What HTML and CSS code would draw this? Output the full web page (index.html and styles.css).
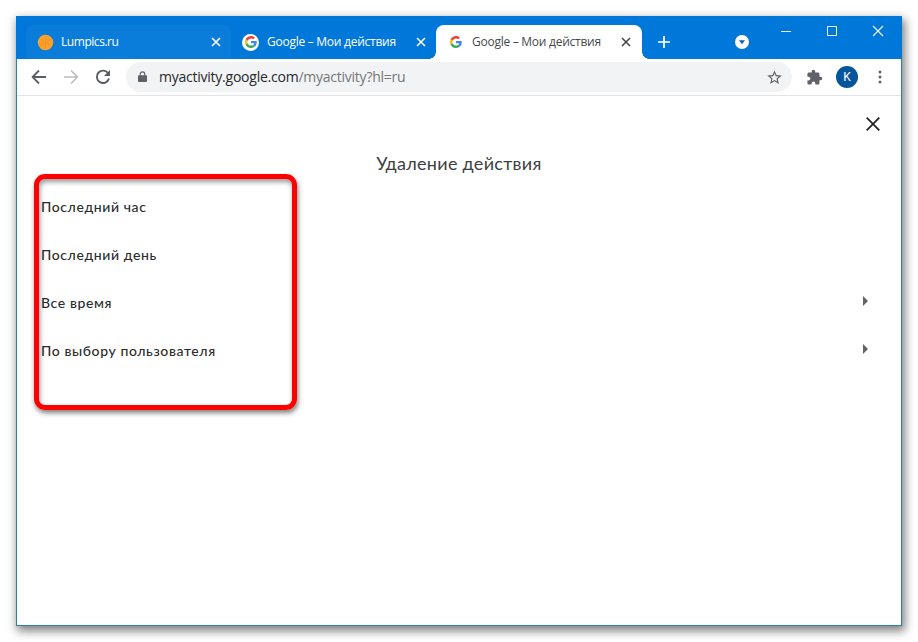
FILE: index.html
```html
<!DOCTYPE html>
<html lang="ru">
<head>
  <meta charset="UTF-8">
  <meta name="viewport" content="width=device-width, initial-scale=1.0">
  <title>Google – Мои действия</title>
  <link rel="stylesheet" href="styles.css">
</head>
<body>
  <svg width="0" height="0" class="defs">
    <symbol id="google" viewBox="0 0 48 48">
      <path fill="#EA4335" d="M24 9.5c3.54 0 6.71 1.22 9.21 3.6l6.85-6.85C35.9 2.38 30.47 0 24 0 14.62 0 6.51 5.38 2.56 13.22l7.98 6.19C12.43 13.72 17.74 9.5 24 9.5z"/>
      <path fill="#4285F4" d="M46.98 24.55c0-1.57-.15-3.09-.38-4.55H24v9.02h12.94c-.58 2.96-2.26 5.48-4.78 7.18l7.73 6c4.51-4.18 7.09-10.36 7.09-17.65z"/>
      <path fill="#FBBC05" d="M10.53 28.59c-.48-1.45-.76-2.99-.76-4.59s.27-3.14.76-4.59l-7.98-6.19C.92 16.46 0 20.12 0 24c0 3.88.92 7.54 2.56 10.78l7.97-6.19z"/>
      <path fill="#34A853" d="M24 48c6.48 0 11.93-2.13 15.89-5.81l-7.73-6c-2.15 1.45-4.92 2.3-8.16 2.3-6.26 0-11.57-4.22-13.47-9.91l-7.98 6.19C6.51 42.62 14.62 48 24 48z"/>
    </symbol>
    <symbol id="cross" viewBox="0 0 10 10">
      <path d="M1 1l8 8M9 1L1 9" fill="none" stroke="currentColor" stroke-width="1.6"/>
    </symbol>
  </svg>

  <div class="window">
    <div class="tabstrip">
      <div class="tab tab-hover">
        <svg class="favicon" viewBox="0 0 18 18">
          <circle cx="9" cy="9" r="8.2" fill="#fba02a"/>
          <path d="M9 9V3M9 9l5-3M9 9l5 3M9 9v6M9 9l-5 3M9 9L4 6" stroke="#f39420" stroke-width="1"/>
        </svg>
        <span class="tab-title title-short">Lumpics.ru</span>
        <svg class="tab-close"><use href="#cross"/></svg>
      </div>
      <div class="tab">
        <span class="favicon favicon-round"><svg width="12" height="12"><use href="#google"/></svg></span>
        <span class="tab-title">Google – Мои действия</span>
        <svg class="tab-close"><use href="#cross"/></svg>
      </div>
      <div class="tab tab-active">
        <span class="favicon"><svg width="12" height="12"><use href="#google"/></svg></span>
        <span class="tab-title">Google – Мои действия</span>
        <svg class="tab-close"><use href="#cross"/></svg>
      </div>
      <svg class="new-tab" viewBox="0 0 12 12"><path d="M6 0v12M0 6h12" stroke="#fff" stroke-width="1.7"/></svg>
      <svg class="tab-search" viewBox="0 0 14 14"><circle cx="7" cy="7" r="7" fill="#fff"/><path d="M4 5.2h6L7 9.2z" fill="#0a62b5"/></svg>
      <div class="window-buttons">
        <svg viewBox="0 0 12 12"><path d="M1 6.5h10" stroke="#fff"/></svg>
        <svg viewBox="0 0 12 12"><path d="M1.5 1.5h9v9h-9z" fill="none" stroke="#fff"/></svg>
        <svg viewBox="0 0 12 12"><path d="M1 1l10 10M11 1L1 11" stroke="#fff" stroke-width="1.1"/></svg>
      </div>
    </div>

    <div class="toolbar">
      <svg class="nav" viewBox="0 0 16 16"><path d="M15 8H2M8 1.5L1.6 8 8 14.5" fill="none" stroke="#5a5d61" stroke-width="1.8"/></svg>
      <svg class="nav" viewBox="0 0 16 16"><path d="M1 8h13M8 1.5L14.4 8 8 14.5" fill="none" stroke="#babcbe" stroke-width="1.6"/></svg>
      <svg class="nav" viewBox="0 0 16 16"><path d="M13.3 4.5A6.2 6.2 0 1 0 14 9.5" fill="none" stroke="#5a5d61" stroke-width="1.9"/><path d="M15 1v6H9z" fill="#5a5d61"/></svg>
      <div class="omnibox">
        <svg class="lock" viewBox="0 0 10 13"><path d="M1 4.5h8q1 0 1 1V11q0 1-1 1H1q-1 0-1-1V5.500q0-1 1-1z" fill="#5f6368"/><path d="M2.500 5V3.300a2.500 2.500 0 0 1 5 0V5" fill="none" stroke="#5f6368" stroke-width="1.3"/></svg>
        <span class="url">myactivity.google.com<span class="path">/myactivity?hl=ru</span></span>
        <svg class="star" viewBox="0 0 24 24"><path fill="#5f6368" d="M22 9.240l-7.190-.620L12 2 9.190 8.630 2 9.240l5.460 4.730L5.820 21 12 17.270 18.180 21l-1.630-7.030L22 9.240zM12 15.400l-3.760 2.270 1-4.280-3.320-2.880 4.380-.380L12 6.100l1.710 4.040 4.380.380-3.320 2.880 1 4.280L12 15.400z"/></svg>
      </div>
      <svg class="puzzle" viewBox="0 0 24 24"><path fill="#5f6368" d="M20.500 11H19V7c0-1.100-.9-2-2-2h-4V3.500a2.500 2.500 0 0 0-5 0V5H4c-1.100 0-2 .9-2 2v3.800h1.500a2.700 2.700 0 0 1 0 5.400H2V20c0 1.100.9 2 2 2h3.800v-1.500a2.700 2.700 0 0 1 5.400 0V22H17c1.100 0 2-.9 2-2v-4h1.500a2.500 2.500 0 0 0 0-5z"/></svg>
      <div class="avatar">K</div>
      <svg class="dots" viewBox="0 0 4 14"><circle cx="2" cy="2" r="1.5"/><circle cx="2" cy="7" r="1.5"/><circle cx="2" cy="12" r="1.5"/></svg>
    </div>

    <div class="page">
      <svg class="page-close" viewBox="0 0 14 14"><path d="M.7.7l12.600 12.600M13.300.7L.7 13.300" stroke="#202124" stroke-width="1.7"/></svg>
      <h1>Удаление действия</h1>
      <ul class="ranges">
        <li><span>Последний час</span></li>
        <li><span>Последний день</span></li>
        <li><span>Все время</span><i class="arrow"></i></li>
        <li><span>По выбору пользователя</span><i class="arrow"></i></li>
      </ul>
      <div class="highlight"></div>
    </div>
  </div>
</body>
</html>
```
FILE: styles.css
```css
* {
  box-sizing: border-box;
}

body {
  margin: 0;
  padding: 16px;
  height: 642px;
  background: #fff;
  font-family: "Open Sans", "Noto Sans", sans-serif;
  overflow: hidden;
}

svg {
  display: block;
  flex: none;
}

.defs {
  position: absolute;
}

.window {
  width: 886px;
  height: 610px;
  border: 1px solid #2d819c;
  border-top-color: #0078d7;
  background: #fff;
  box-shadow: 2px 4px 9px 1px rgba(0,0,0,0.5);
}

/* tabs */
.tabstrip {
  display: flex;
  height: 42px;
  margin: 0 -1px;
  padding: 8px 0 0 10px;
  background: #0078d9;
}

.tab {
  display: flex;
  align-items: center;
  width: 205px;
  height: 34px;
  padding: 0 10px 0 11px;
  color: #fff;
}

.tab-hover {
  background: #0a7dda;
  border-radius: 8px 8px 0 0;
}

.tab-active {
  position: relative;
  width: 206px;
  padding-right: 11px;
  background: #fff;
  color: #45494d;
  border-radius: 8px 8px 0 0;
}

.tab-active::before,
.tab-active::after {
  content: "";
  position: absolute;
  bottom: 0;
  width: 7px;
  height: 7px;
}

.tab-active::before {
  left: -7px;
  background: radial-gradient(circle at 0 0, transparent 6.5px, #fff 7px);
}

.tab-active::after {
  right: -7px;
  background: radial-gradient(circle at 100% 0, transparent 6.5px, #fff 7px);
}

.favicon {
  display: flex;
  align-items: center;
  justify-content: center;
  width: 17px;
  height: 17px;
  margin-right: 8px;
}

.favicon-round {
  background: #fff;
  border-radius: 50%;
}

.tab-title {
  flex: 1;
  font-size: 12px;
  line-height: 16px;
  letter-spacing: -0.26px;
  white-space: nowrap;
}

.title-short {
  margin-left: -1px;
  letter-spacing: -0.45px;
}

.tab-close {
  width: 10px;
  height: 10px;
}

.new-tab {
  width: 12px;
  height: 12px;
  margin: 11px 0 0 16px;
}

.tab-search {
  width: 14px;
  height: 14px;
  margin: 10px 0 0 65px;
}

.window-buttons {
  display: flex;
  gap: 34px;
  margin-left: 31px;
}

.window-buttons svg {
  width: 12px;
  height: 12px;
}

/* toolbar */
.toolbar {
  display: flex;
  align-items: center;
  height: 37px;
  padding-left: 14px;
  border-bottom: 1px solid #e2e4e6;
}

.nav {
  width: 16px;
  height: 16px;
  margin-right: 16px;
}

.omnibox {
  display: flex;
  align-items: center;
  width: 666px;
  height: 30px;
  margin-left: -1px;
  padding: 0 9px 0 12px;
  border-radius: 15px;
  background: #f1f3f4;
}

.lock {
  width: 9px;
  height: 12px;
}

.url {
  flex: 1;
  margin-left: 12px;
  font-size: 14px;
  line-height: 20px;
  letter-spacing: -0.24px;
  color: #27292c;
}

.path {
  color: #74787c;
}

.star {
  width: 17px;
  height: 17px;
}

.puzzle {
  width: 17px;
  height: 17px;
  margin-left: 14px;
}

.avatar {
  width: 22px;
  height: 22px;
  margin-left: 13px;
  border-radius: 50%;
  background: #05559b;
  color: #fff;
  font: 12px/22px Roboto, sans-serif;
  text-align: center;
}

.dots {
  width: 4px;
  height: 14px;
  margin-left: 20px;
  fill: #5f6368;
}

/* page */
.page {
  position: relative;
  padding: 21px 21px 0 24px;
  font-family: Lato, Roboto, sans-serif;
  color: #2c2d30;
}

.page-close {
  width: 14px;
  height: 14px;
  margin-left: auto;
}

h1 {
  margin: 20px 0 0 -3px;
  font-size: 18px;
  line-height: 24px;
  font-weight: 400;
  letter-spacing: 0.3px;
  text-align: center;
  color: #3c4043;
}

.ranges {
  margin: 7px 0 0;
  padding: 0;
  list-style: none;
}

.ranges li {
  display: flex;
  align-items: center;
  justify-content: space-between;
  height: 48px;
  padding-right: 12px;
  font-size: 14px;
  font-weight: 500;
  letter-spacing: 0.6px;
}

.arrow {
  margin-top: -2px;
  border: 5px solid transparent;
  border-left: 5px solid #626262;
  border-right: 0;
}

/* frame drawn over the list */
.highlight {
  position: absolute;
  left: 17px;
  top: 78px;
  width: 263px;
  height: 236px;
  border: 5px solid #fe0000;
  border-radius: 11px;
  box-shadow: 1px 3px 5px rgba(0,0,0,0.5), inset 1px 3px 5px rgba(0,0,0,0.4);
}
```
